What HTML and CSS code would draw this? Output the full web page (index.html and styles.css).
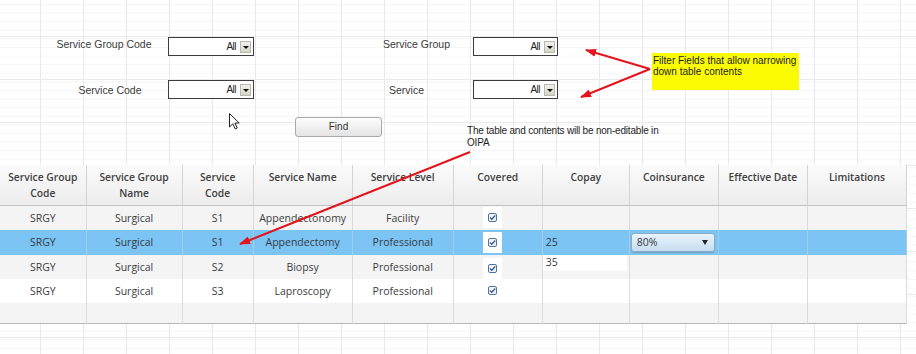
FILE: index.html
```html
<!DOCTYPE html>
<html lang="en">
<head>
<meta charset="UTF-8">
<title>Service Coverage</title>
<link rel="stylesheet" href="styles.css">
</head>
<body>
<div class="page">
    <div class="filters">
        <div class="filter-grid">
            <label class="field-label">Service Group Code</label>
            <div class="combo"><span class="combo-value">All</span><span class="combo-btn"></span></div>
            <span></span>
            <label class="field-label">Service Group</label>
            <div class="combo"><span class="combo-value">All</span><span class="combo-btn"></span></div>

            <label class="field-label field-label-low">Service Code</label>
            <div class="combo"><span class="combo-value">All</span><span class="combo-btn"></span></div>
            <span></span>
            <label class="field-label field-label-low field-label-left">Service</label>
            <div class="combo"><span class="combo-value">All</span><span class="combo-btn"></span></div>
        </div>
        <div class="actions">
            <button class="find-btn">Find</button>
        </div>
    </div>

    <table class="services">
        <colgroup>
            <col style="width:86px"><col style="width:96px"><col style="width:71px">
            <col style="width:99px"><col style="width:101px"><col style="width:89px">
            <col style="width:87px"><col style="width:89px"><col style="width:89px">
            <col style="width:99px">
        </colgroup>
        <thead>
            <tr>
                <th>Service Group<br>Code</th>
                <th>Service Group<br>Name</th>
                <th>Service<br>Code</th>
                <th>Service Name</th>
                <th>Service Level</th>
                <th>Covered</th>
                <th>Copay</th>
                <th>Coinsurance</th>
                <th>Effective Date</th>
                <th>Limitations</th>
            </tr>
        </thead>
        <tbody>
            <tr class="row-alt">
                <td>SRGY</td><td>Surgical</td><td>S1</td><td>Appendectonomy</td><td>Facility</td>
                <td class="covered"><span class="check"><svg width="9" height="9" viewBox="0 0 9 9"><rect x="0.5" y="0.5" width="8" height="8" rx="1.5" fill="#eef3f9" stroke="#4f73a3"/><path d="M2 4.5 L3.8 6.3 L7.2 2.5" fill="none" stroke="#3d5f8e" stroke-width="1.3"/></svg></span></td>
                <td></td><td></td><td></td><td></td>
            </tr>
            <tr class="row-selected">
                <td>SRGY</td><td>Surgical</td><td>S1</td><td>Appendectomy</td><td>Professional</td>
                <td class="covered"><span class="check"><svg width="9" height="9" viewBox="0 0 9 9"><rect x="0.5" y="0.5" width="8" height="8" rx="1.5" fill="#eef3f9" stroke="#4f73a3"/><path d="M2 4.5 L3.8 6.3 L7.2 2.5" fill="none" stroke="#3d5f8e" stroke-width="1.3"/></svg></span></td>
                <td class="copay">25</td>
                <td class="coins"><div class="coins-select"><span>80%</span><span class="coins-arrow"></span></div></td>
                <td></td><td></td>
            </tr>
            <tr class="row-alt">
                <td>SRGY</td><td>Surgical</td><td>S2</td><td>Biopsy</td><td>Professional</td>
                <td class="covered check-low"><span class="check"><svg width="9" height="9" viewBox="0 0 9 9"><rect x="0.5" y="0.5" width="8" height="8" rx="1.5" fill="#eef3f9" stroke="#4f73a3"/><path d="M2 4.5 L3.8 6.3 L7.2 2.5" fill="none" stroke="#3d5f8e" stroke-width="1.3"/></svg></span></td>
                <td class="copay-edit"><div class="copay-input">35</div></td>
                <td></td><td></td><td></td>
            </tr>
            <tr>
                <td>SRGY</td><td>Surgical</td><td>S3</td><td>Laproscopy</td><td>Professional</td>
                <td class="covered"><span class="check"><svg width="9" height="9" viewBox="0 0 9 9"><rect x="0.5" y="0.5" width="8" height="8" rx="1.5" fill="#eef3f9" stroke="#4f73a3"/><path d="M2 4.5 L3.8 6.3 L7.2 2.5" fill="none" stroke="#3d5f8e" stroke-width="1.3"/></svg></span></td>
                <td></td><td></td><td></td><td></td>
            </tr>
            <tr class="row-alt row-empty">
                <td></td><td></td><td></td><td></td><td></td><td></td><td></td><td></td><td></td><td></td>
            </tr>
        </tbody>
    </table>

    <!-- annotations laid over the mockup -->
    <div class="note note-yellow">Filter Fields that allow narrowing down table contents</div>
    <div class="note note-plain">The table and contents will be non-editable in OIPA</div>

    <svg class="overlay" width="916" height="354" viewBox="0 0 916 354">
        <defs>
            <marker id="head" markerUnits="userSpaceOnUse" markerWidth="11" markerHeight="8" refX="10" refY="4" orient="auto">
                <path d="M0,0 L11,4 L0,8 Z" fill="#e3141b"/>
            </marker>
        </defs>
        <line x1="650" y1="69" x2="586" y2="50" stroke="#e3141b" stroke-width="2" marker-end="url(#head)"/>
        <line x1="650" y1="69" x2="581" y2="97" stroke="#e3141b" stroke-width="2" marker-end="url(#head)"/>
        <line x1="470" y1="152" x2="240" y2="244" stroke="#e3141b" stroke-width="2" marker-end="url(#head)"/>
        <path d="M229.5 113.5 L229.5 127 L232.8 123.8 L235.3 129 L237.3 128 L234.9 123 L239.2 123 Z" fill="#fff" stroke="#222" stroke-width="1"/>
    </svg>
</div>
</body>
</html>
```

FILE: styles.css
```css
body {
    margin: 0;
    background: #fff;
    font-family: "Liberation Sans", Arial, sans-serif;
}

.page {
    position: relative;
    width: 916px;
    height: 354px;
    overflow: hidden;
    background-color: #fff;
    background-image:
        linear-gradient(to right, #e9e9e9 1px, transparent 1px),
        linear-gradient(to bottom, #e9e9e9 1px, transparent 1px),
        linear-gradient(to bottom, #f5f5f5 1px, transparent 1px);
    background-size: 43px 43px, 43px 43px, 43px 8.6px;
    background-position: 40px 36px, 40px 36px, 0 4px;
}

.filters {
    height: 165px;
    box-sizing: border-box;
    padding-top: 37px;
}

.filter-grid {
    display: grid;
    grid-template-columns: 128px 86px 106px 113px 85px;
    grid-auto-rows: 19px;
    row-gap: 24px;
    padding-left: 40px;
}

.field-label {
    align-self: start;
    text-align: center;
    font-size: 10.5px;
    color: #3a3a3a;
    line-height: 14px;
}

.field-label-low {
    padding-top: 3px;
    padding-left: 12px;
}

.field-label-left {
    padding-left: 0;
    padding-right: 20px;
}

.combo {
    display: flex;
    align-items: center;
    justify-content: flex-end;
    gap: 4px;
    height: 19px;
    box-sizing: border-box;
    border: 1px solid #3c3c3c;
    background: #fff;
    padding-right: 2px;
}

.combo-value {
    font-size: 10px;
    letter-spacing: -0.5px;
    color: #222;
}

.combo-btn {
    position: relative;
    width: 11px;
    height: 12px;
    background: linear-gradient(#f2f1ec, #d6d3c8);
    border: 1px solid #bdb9ad;
    box-sizing: border-box;
}

.combo-btn::after {
    content: "";
    position: absolute;
    left: 2px;
    top: 4px;
    border-left: 3px solid transparent;
    border-right: 3px solid transparent;
    border-top: 3px solid #111;
}

.actions {
    padding-left: 295px;
    margin-top: 17px;
}

.find-btn {
    width: 87px;
    height: 20px;
    border: 1px solid #a9a9a9;
    border-radius: 3px;
    background: linear-gradient(#fdfdfd, #e4e4e4);
    font-family: "Liberation Sans", Arial, sans-serif;
    font-size: 10px;
    color: #333;
    padding: 0;
}

.services {
    border-collapse: collapse;
    table-layout: fixed;
    width: 907px;
    font-family: "Open Sans", "DejaVu Sans", sans-serif;
    font-size: 10.5px;
    color: #3d3d3d;
    border-right: 1px solid #c9c9c9;
    border-bottom: 1px solid #b8b8b8;
}

.services th {
    height: 40px;
    box-sizing: border-box;
    padding: 4px 2px 0;
    vertical-align: top;
    font-size: 10.3px;
    font-weight: 600;
    line-height: 16px;
    color: #3f3f3f;
    background: linear-gradient(#fbfbfb, #ececec);
    border-right: 1px solid #d4d4d4;
    border-bottom: 1px solid #c4c4c4;
}

.services td {
    height: 24px;
    padding: 0 2px;
    text-align: center;
    border-right: 1px solid #dcdcdc;
    background: #fff;
}

.services tr.row-alt td {
    background: #f4f4f4;
}

.services tr.row-selected td {
    height: 25px;
    background: #7cc4f3;
    border-right-color: #9ccde9;
    color: #333b44;
}

.services tr.row-empty td {
    height: 20px;
}

.services td.covered {
    padding-right: 12px;
}

.check {
    display: inline-flex;
    align-items: center;
    justify-content: center;
    width: 19px;
    height: 21px;
    background: #fff;
    vertical-align: middle;
}

.services td.check-low {
    vertical-align: bottom;
}

.services td.copay {
    text-align: left;
    padding-left: 3px;
}

.services td.copay-edit {
    vertical-align: top;
    padding: 0;
}

.copay-input {
    width: 84px;
    height: 16px;
    background: #fff;
    text-align: left;
    padding-left: 3px;
    box-sizing: border-box;
    line-height: 15px;
}

.services td.coins {
    padding: 0 2px 0 1px;
}

.coins-select {
    display: flex;
    align-items: center;
    justify-content: space-between;
    width: 84px;
    height: 19px;
    box-sizing: border-box;
    padding: 0 6px 0 5px;
    border: 1px solid #8ea9c2;
    border-radius: 3px;
    background: linear-gradient(#e9f3fb, #c7ddf0);
    box-shadow: 0 1px 1px rgba(0,0,0,0.15);
    text-align: left;
}

.coins-arrow {
    border-left: 3px solid transparent;
    border-right: 3px solid transparent;
    border-top: 5px solid #222;
}

.note {
    position: absolute;
    font-family: "Liberation Sans", Arial, sans-serif;
    font-size: 10px;
    line-height: 11px;
    color: #1e1e1e;
}

.note-yellow {
    left: 652px;
    top: 53px;
    width: 147px;
    height: 37px;
    box-sizing: border-box;
    padding: 2px 1px;
    background: #fbfb04;
}

.note-plain {
    left: 467px;
    top: 125px;
    width: 195px;
    line-height: 12px;
    letter-spacing: -0.2px;
}

.overlay {
    position: absolute;
    left: 0;
    top: 0;
    pointer-events: none;
}
```
